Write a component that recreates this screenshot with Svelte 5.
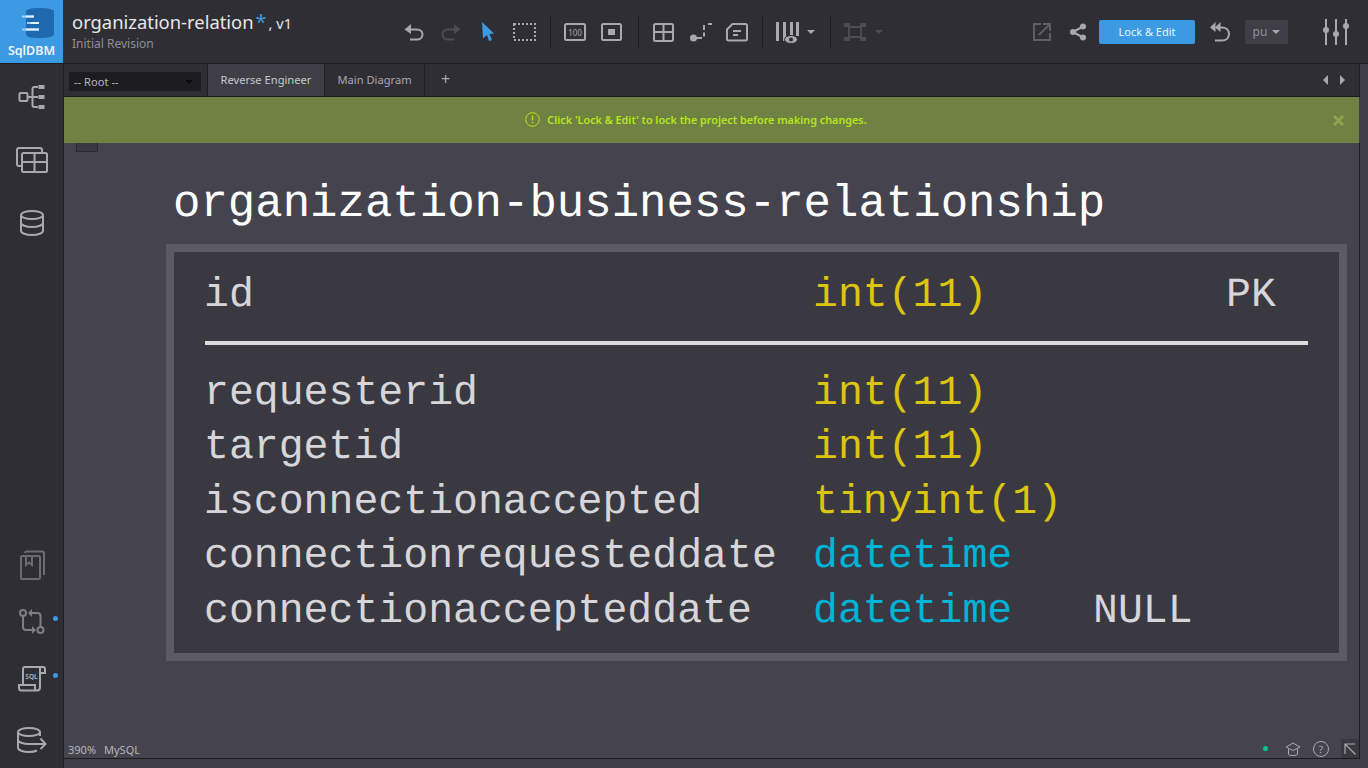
<script>
  const rows = [
    { name: "requesterid", type: "int(11)", kind: "num" },
    { name: "targetid", type: "int(11)", kind: "num" },
    { name: "isconnectionaccepted", type: "tinyint(1)", kind: "num" },
    { name: "connectionrequesteddate", type: "datetime", kind: "date" },
    { name: "connectionaccepteddate", type: "datetime", kind: "date", nullable: "NULL" }
  ];
</script>

<div class="app">
  <header class="topbar">
    <div class="logo">
      <svg width="63" height="42" viewBox="0 0 63 42">
        <path d="M26 12 C26 9 31 8 39 8 C48 8 54 9 54 12 L54 34 C54 37 48 38 39 38 C31 38 26 37 26 34 Z" fill="#1f69ae" />
        <path d="M22 16.500h12M27 23h12M22 29.500h17" stroke="#9fd0f5" stroke-width="2" fill="none" />
        <path d="M26 16.500h8M31 23h8M26 29.500h13" stroke="#e6f3fd" stroke-width="2" fill="none" />
      </svg>
      <span>SqlDBM</span>
    </div>
    <div class="project">
      <div class="project-name">organization-relation<span class="star">*</span><span class="ver"> , v1</span></div>
      <div class="revision">Initial Revision</div>
    </div>

    <div class="tools">
      <svg class="ic" width="24" height="24" viewBox="0 0 24 24" fill="none" stroke="#a9a8ae" stroke-width="2"><path d="M9 4 L2.500 9.500 L9 14 Z" fill="#a9a8ae" stroke="none" /><path d="M7 9.500H15 C18 9.500 20.500 11.500 20.500 14.500 C20.500 17.500 18 19.500 15 19.500H8" /></svg>
      <svg class="ic" width="24" height="24" viewBox="0 0 24 24" fill="none" stroke="#4d4c53" stroke-width="2"><path d="M15 4 L21.500 9.500 L15 14 Z" fill="#4d4c53" stroke="none" /><path d="M17 9.500H9 C6 9.500 3.500 11.500 3.500 14.500 C3.500 17.500 6 19.500 9 19.500H15" /></svg>
      <svg class="ic" width="24" height="24" viewBox="0 0 24 24"><path d="M6 2 L18 13.500 L13.500 14 L16 20 L13 21 L11 15 L7 18.500 Z" fill="#3b9ae1" /></svg>
      <svg class="ic" width="24" height="24" viewBox="0 0 24 24" fill="none" stroke="#a9a8ae" stroke-width="2" stroke-dasharray="2 2"><rect x="1" y="4" width="21" height="16" /></svg>
      <i class="sep"></i>
      <svg class="ic" width="24" height="24" viewBox="1 0 24 24" fill="none"><rect x="2" y="4" width="20" height="16" rx="1.500" stroke="#a9a8ae" stroke-width="2" /><text x="12" y="15.500" text-anchor="middle" class="tiny">100</text></svg>
      <svg class="ic" width="24" height="24" viewBox="2 0 24 24" fill="none"><rect x="3" y="4" width="19" height="16" rx="1.500" stroke="#a9a8ae" stroke-width="2" /><rect x="9" y="9" width="7" height="6" fill="#a9a8ae" /></svg>
      <i class="sep"></i>
      <svg class="ic" width="24" height="24" viewBox="1 0 24 24" fill="none" stroke="#a9a8ae" stroke-width="2"><rect x="3" y="4" width="19" height="17" rx="1.500" /><path d="M3 12h19M12.500 4v17" /></svg>
      <svg class="ic" width="24" height="24" viewBox="0 0 24 24" fill="none" stroke="#a9a8ae" stroke-width="2"><circle cx="4.500" cy="18" r="2.500" fill="#a9a8ae" /><path d="M7 18h6M15 16.500v-4M15 10V5M19 4h4" /></svg>
      <svg class="ic" width="23" height="24" viewBox="1.500 0 23 24" fill="none" stroke="#a9a8ae" stroke-width="2"><path d="M8 4H21 C22 4 22.500 4.500 22.500 5.500V19 C22.500 20 22 20.500 21 20.500H4 C3 20.500 2.500 20 2.500 19V9.500 Z" /><path d="M8.500 11h8M8.500 15h5" /></svg>
      <i class="sep"></i>
      <div class="with-caret cols">
        <svg width="25" height="24" viewBox="2 0 25 24"><path d="M2 2h3v19h-3zM9 2h3v19h-3zM16 2h3v14h-3zM22 2h3v14h-3z" fill="#a9a8ae" /><ellipse cx="17" cy="19.500" rx="6.500" ry="4" fill="#a9a8ae" stroke="#2f2e35" stroke-width="1" /><circle cx="17" cy="19.500" r="2" fill="#2f2e35" /></svg>
        <b class="caret"></b>
      </div>
      <i class="sep"></i>
      <div class="with-caret fit">
        <svg width="24" height="24" viewBox="1 0 24 24"><path d="M6 7h12v10h-12z" fill="none" stroke="#4d4c53" stroke-width="2" /><path d="M1 3h6v4h-6zM17 3h6v4h-6zM1 17h6v4h-6zM17 17h6v4h-6z" fill="#4d4c53" /></svg>
        <b class="caret off"></b>
      </div>
    </div>

    <div class="actions">
      <svg class="export" width="20" height="20" viewBox="0 0 20 20" fill="none" stroke="#5f5e65" stroke-width="2"><path d="M9 2H2V18H18V11" /><path d="M7 13 L17.500 2.500M11 2h7v7" /></svg>
      <svg class="share" width="18" height="18" viewBox="0 0 18 18"><path d="M14 3.500 L4 9 L14 14.500" fill="none" stroke="#a9a8ae" stroke-width="2" /><circle cx="14" cy="3.500" r="3" fill="#a9a8ae" /><circle cx="4" cy="9" r="3" fill="#a9a8ae" /><circle cx="14" cy="14.500" r="3" fill="#a9a8ae" /></svg>
      <button class="lock">Lock &amp; Edit</button>
      <svg class="reply" width="22" height="22" viewBox="0 0 22 22" fill="none" stroke="#a9a8ae" stroke-width="2"><path d="M6.500 1 L1 6.500 L6.500 11 Z" fill="#a9a8ae" stroke="none" /><path d="M11.500 1 L6 6.500 L11.500 11 Z" fill="#a9a8ae" stroke="none" /><path d="M9 6.500H13 C17 6.500 20 9 20 13 C20 17 17 19.500 13 19.500H6" /></svg>
      <div class="user">pu <b class="caret"></b></div>
      <svg class="mixer" width="28" height="26" viewBox="0 0 28 26" fill="#a9a8ae"><path d="M3 0h2v26h-2zM13 0h2v26h-2zM23 0h2v26h-2z" /><circle cx="4" cy="11" r="3" /><circle cx="14" cy="15" r="3" /><circle cx="24" cy="7" r="3" /></svg>
    </div>
  </header>

  <div class="body">
    <aside class="side">
      <div class="side-group">
        <svg width="30" height="26" viewBox="0 0 30 26" fill="none" stroke="#a9a8ae" stroke-width="2"><rect x="2.500" y="9" width="8" height="8" rx="1" /><path d="M11 13h4.500M21 3h-3.500 C16.500 3 15.500 4 15.500 5V21 C15.500 22 16.500 23 17.500 23h3.500M15.500 13h5.500" /><path d="M21.500 1h6v4h-6zM21.500 11h6v4h-6zM21.500 21h6v4h-6z" fill="#a9a8ae" stroke="none" /></svg>
        <svg width="32" height="26" viewBox="0 0 32 26" fill="none" stroke="#a9a8ae" stroke-width="2"><path d="M5 19H3 C2 19 1 18 1 17V3 C1 2 2 1 3 1H24 C25 1 26 2 26 3V5" /><rect x="6" y="6" width="25" height="19" rx="1.500" /><path d="M6 15h25M18.500 7v18" /></svg>
        <svg width="24" height="26" viewBox="0 0 24 26" fill="none" stroke="#a9a8ae" stroke-width="2"><ellipse cx="12" cy="5" rx="11" ry="4" /><path d="M1 5V21 C1 23 6 25 12 25 C18 25 23 23 23 21V5M1 13 C1 15 6 17 12 17 C18 17 23 15 23 13" /></svg>
      </div>
      <div class="side-group lower">
        <svg width="26" height="30" viewBox="0 0 26 30" fill="none" stroke="#6c6b72" stroke-width="2"><rect x="2" y="6" width="19" height="23" rx="1.500" /><path d="M6 3 C6 2 7 1.500 8 1.500H23 C24 1.500 25 2 25 3V25" /><path d="M7 6V15L10 12.500L13 15V6" /></svg>
        <div class="dotted">
          <svg width="26" height="26" viewBox="0 0 26 26" fill="none" stroke="#7f7e85" stroke-width="2"><circle cx="4" cy="4" r="3" /><circle cx="21.500" cy="21" r="3" /><path d="M4 7V18 C4 20 5 21 7 21H13" /><path d="M13 17L17 21L13 25Z" fill="#7f7e85" stroke="none" /><path d="M21.500 18V7 C21.500 5 20.500 4 18.500 4H13" /><path d="M13 0L9 4L13 8Z" fill="#7f7e85" stroke="none" /></svg>
          <em></em>
        </div>
        <div class="dotted">
          <svg width="28" height="26" viewBox="0 0 28 26" fill="none" stroke="#a9a8ae" stroke-width="2"><path d="M5 18V3 C5 2 6 1 7 1H25 C26.500 1 27 2 27 3V7H22" /><path d="M22 1V21 C22 23.500 21 24.500 19 24.500H3 C1.500 24.500 1 23.500 1 21.500V19H17V24" /><text x="13.500" y="13" text-anchor="middle" class="sql">SQL</text></svg>
          <em></em>
        </div>
        <svg class="last" width="30" height="26" viewBox="0 0 30 26" fill="none" stroke="#a9a8ae" stroke-width="2"><ellipse cx="12" cy="5" rx="11" ry="4" /><path d="M1 5V21 C1 23 6 25 12 25 C15 25 18 24.500 20 23.500M1 13 C1 15 6 17 12 17H28M23 5V9M23.500 11.500L28.500 17L23.500 22" /></svg>
      </div>
    </aside>

    <main class="main">
      <nav class="tabs">
        <div class="root-select"><span>-- Root --</span><b class="caret dark"></b></div>
        <div class="tab active">Reverse Engineer</div>
        <div class="tab">Main Diagram</div>
        <div class="tab plus">+</div>
        <div class="arrows"><b class="tri left"></b><b class="tri right"></b></div>
      </nav>

      <div class="notice">
        <svg width="15" height="15" viewBox="0 0 15 15" fill="none" stroke="#b5e61d"><circle cx="7.500" cy="7.500" r="6.800" /><path d="M7.500 3.500v5M7.500 10v1.500" stroke-width="1.200" /></svg>
        <span>Click 'Lock &amp; Edit' to lock the project before making changes.</span>
        <svg class="close" width="11" height="11" viewBox="0 0 11 11" stroke="#8fa34f" stroke-width="3"><path d="M1 1L10 10M10 1L1 10" /></svg>
      </div>

      <div class="canvas">
        <div class="stub"></div>
        <h1>organization-business-relationship</h1>
        <section class="entity">
          <div class="row pk">
            <span>id</span><span class="num">int(11)</span><span></span><span>PK</span>
          </div>
          <hr />
          <div class="fields">
            {#each rows as r}
              <div class="row">
                <span>{r.name}</span><span class={r.kind}>{r.type}</span><span>{r.nullable ?? ""}</span><span></span>
              </div>
            {/each}
          </div>
        </section>

        <div class="status">
          <span>390%</span><span>MySQL</span>
        </div>
        <div class="corner">
          <i class="online"></i>
          <svg width="16" height="14" viewBox="0 0 16 14" fill="none" stroke="#a9a8ae"><path d="M8 1L15 5L8 8.500L1 5Z" /><path d="M3.500 7V12 C3.500 13 5 13.500 8 13.500 C11 13.500 12.500 13 12.500 12V7" /></svg>
          <span class="help">?</span>
          <span class="expand">
            <svg width="12" height="12" viewBox="0 0 12 12" fill="none" stroke="#a9a8ae" stroke-width="1.200"><path d="M1 11V1H11M1 1L11.500 11.500" /></svg>
          </span>
        </div>
      </div>
    </main>
  </div>
</div>

<style>
  :global(body) {
    margin: 0;
    background: #2f2e35;
  }

  .app {
    width: 1368px;
    height: 768px;
    overflow: hidden;
    display: flex;
    flex-direction: column;
    font-family: "Noto Sans", "Open Sans", sans-serif;
    color: #c9c8cd;
    background: #2f2e35;
  }

  .topbar {
    height: 63px;
    flex: none;
    display: flex;
    align-items: stretch;
    border-bottom: 1px solid #1d1c21;
    position: relative;
  }

  .logo {
    width: 63px;
    height: 63px;
    background: #3b9ae1;
    display: flex;
    flex-direction: column;
    align-items: center;
    flex: none;
    color: #eaf5fd;
    font-size: 12.500px;
    font-weight: 600;
  }

  .logo span {
    margin-top: 1px;
    line-height: 16px;
  }

  .project {
    width: 310px;
    padding: 9px 0 0 9px;
    box-sizing: border-box;
    flex: none;
  }

  .project-name {
    font-size: 18.400px;
    line-height: 25px;
    color: #e6e6ea;
    white-space: nowrap;
  }

  .star {
    color: #3b9ae1;
    font-size: 20px;
    line-height: 20px;
    margin-left: 2px;
  }

  .ver {
    font-size: 14.500px;
    margin-left: 2px;
  }

  .revision {
    font-size: 12px;
    line-height: 16px;
    color: #8f8e95;
  }

  .tools {
    display: flex;
    align-items: center;
    margin-left: 29px;
    gap: 13px;
    height: 63px;
  }

  .ic {
    flex: none;
  }

  .sep {
    width: 1px;
    height: 34px;
    background: #1d1c21;
  }

  .tiny {
    font-family: "Noto Sans", sans-serif;
    font-size: 8px;
    fill: #a9a8ae;
    stroke: none;
  }

  .sql {
    font-family: "Noto Sans", sans-serif;
    font-size: 6.500px;
    font-weight: 700;
    fill: #a9a8ae;
    stroke: none;
  }

  .with-caret {
    display: flex;
    align-items: center;
    gap: 8px;
  }

  .with-caret.cols {
    gap: 6px;
    margin-right: 2px;
  }

  .with-caret.fit {
    gap: 7px;
  }

  .caret {
    width: 0;
    height: 0;
    display: inline-block;
    border-left: 4px solid transparent;
    border-right: 4px solid transparent;
    border-top: 4px solid #a9a8ae;
  }

  .caret.off {
    border-top-color: #4d4c53;
  }

  .caret.dark {
    border-top-color: #0b0b0d;
  }

  .actions {
    margin-left: auto;
    display: flex;
    align-items: center;
    height: 63px;
    padding-right: 18px;
  }

  .share {
    margin-left: 17px;
  }

  .lock {
    margin-left: 12px;
    width: 96px;
    height: 24px;
    border: none;
    border-radius: 2px;
    background: #3b9ae1;
    color: #e9f4fc;
    font: 11px "Noto Sans", sans-serif;
    padding: 0;
  }

  .reply {
    margin-left: 14px;
  }

  .user {
    margin-left: 14px;
    margin-right: 1px;
    width: 43px;
    height: 24px;
    background: #403f47;
    border-radius: 2px;
    display: flex;
    align-items: center;
    justify-content: center;
    gap: 5px;
    font-size: 12px;
    color: #8f8e95;
    box-sizing: border-box;
  }

  .mixer {
    margin-left: 33px;
  }

  .body {
    flex: 1;
    display: flex;
    min-height: 0;
  }

  .side {
    width: 63px;
    flex: none;
    border-right: 1px solid #1d1c21;
    display: flex;
    flex-direction: column;
    align-items: center;
    justify-content: space-between;
    padding: 20px 0 15px;
    box-sizing: content-box;
    height: 669px;
  }

  .side-group {
    display: flex;
    flex-direction: column;
    align-items: center;
    gap: 37px;
  }

  .side-group.lower {
    gap: 29px;
  }

  .last {
    margin-top: 6px;
  }

  .dotted {
    position: relative;
    display: flex;
    justify-content: center;
    width: 28px;
  }

  .dotted + .dotted {
    margin-top: 2px;
  }

  .dotted em {
    position: absolute;
    left: 35px;
    top: 7px;
    width: 5px;
    height: 5px;
    border-radius: 50%;
    background: #3b9ae1;
  }

  .main {
    flex: 1;
    min-width: 0;
    display: flex;
    flex-direction: column;
    background: #3f3e46;
  }

  .tabs {
    height: 32px;
    flex: none;
    display: flex;
    align-items: stretch;
    font-size: 11.150px;
    background: #2f2e35;
    border-bottom: 1px solid #1d1c21;
    border-right: 1px solid #1d1c21;
    margin-right: 8px;
  }

  .root-select {
    width: 132px;
    height: 19px;
    margin: 8px 6px 0 5px;
    padding: 0 8px 0 5px;
    box-sizing: border-box;
    background: #1d1c21;
    display: flex;
    align-items: center;
    justify-content: space-between;
    color: #b7b6bb;
  }

  .tab {
    padding: 0 12.500px;
    display: flex;
    align-items: center;
    border-left: 1px solid #1d1c21;
    color: #a9a8ae;
    padding-bottom: 1px;
  }

  .tab.active {
    background: #3f3e46;
    color: #c9c8cd;
  }

  .tab.plus {
    font-size: 16px;
    padding: 0 16px 2px;
  }

  .arrows {
    margin-left: auto;
    display: flex;
    align-items: center;
    gap: 12px;
    padding-right: 14px;
  }

  .tri {
    width: 0;
    height: 0;
    border-top: 5px solid transparent;
    border-bottom: 5px solid transparent;
  }

  .tri.left {
    border-right: 5px solid #a9a8ae;
  }

  .tri.right {
    border-left: 5px solid #a9a8ae;
  }

  .notice {
    height: 46px;
    flex: none;
    background: #6f8143;
    margin-right: 9px;
    display: flex;
    align-items: center;
    justify-content: center;
    gap: 7px;
    color: #b5e61d;
    font-size: 10.800px;
    font-weight: 600;
    position: relative;
    padding: 0 31px 2px 0;
    box-sizing: border-box;
  }

  .close {
    position: absolute;
    right: 15px;
    top: 18px;
  }

  .canvas {
    flex: 1;
    min-height: 0;
    position: relative;
    background: #45434d;
    margin-right: 8px;
    border-right: 1px solid #1d1c21;
    border-bottom: 1px solid #1d1c21;
    margin-bottom: 9px;
    padding: 32px 0 0 102px;
    font-family: "Liberation Mono", monospace;
    text-rendering: geometricPrecision;
  }

  .stub {
    position: absolute;
    left: 12px;
    top: 0;
    width: 20px;
    height: 8px;
    background: #3a3941;
    border: 1px solid #2a2930;
    border-top: none;
  }

  h1 {
    margin: 0 0 0 7px;
    font-size: 45.700px;
    line-height: 58px;
    font-weight: 400;
    color: #fff;
    white-space: nowrap;
  }

  .entity {
    margin-top: 11px;
    width: 1181px;
    height: 417px;
    box-sizing: border-box;
    border: 8px solid #5b5a65;
    background: #3a3941;
    padding: 17px 31px 0;
    color: #d6d6da;
    font-size: 41.500px;
  }

  .row {
    display: grid;
    grid-template-columns: 609px 280px 133px 82px;
    line-height: 54.600px;
    white-space: nowrap;
    margin-left: -1px;
  }

  .num {
    color: #dcc50f;
  }

  .date {
    color: #00b4d8;
  }

  hr {
    margin: 17px 0 0;
    height: 4px;
    border: none;
    background: #dcdcdc;
  }

  .fields {
    margin-top: 22px;
  }

  .status {
    position: absolute;
    left: 4px;
    bottom: 1px;
    display: flex;
    gap: 8px;
    font: 11px "Noto Sans", sans-serif;
    color: #b7b6bb;
    text-rendering: auto;
  }

  .corner {
    position: absolute;
    right: 0;
    bottom: 0;
    display: flex;
    align-items: center;
    font-family: "Noto Sans", sans-serif;
  }

  .online {
    width: 5px;
    height: 5px;
    border-radius: 50%;
    background: #06c98b;
    margin-right: 17px;
  }

  .help {
    width: 14px;
    height: 14px;
    margin: 0 12px 0 12px;
    border: 1px solid #a9a8ae;
    border-radius: 50%;
    font-size: 10px;
    line-height: 14px;
    text-align: center;
    color: #a9a8ae;
  }

  .expand {
    width: 18px;
    height: 19px;
    background: #3a3941;
    display: flex;
    align-items: center;
    justify-content: center;
  }
</style>
